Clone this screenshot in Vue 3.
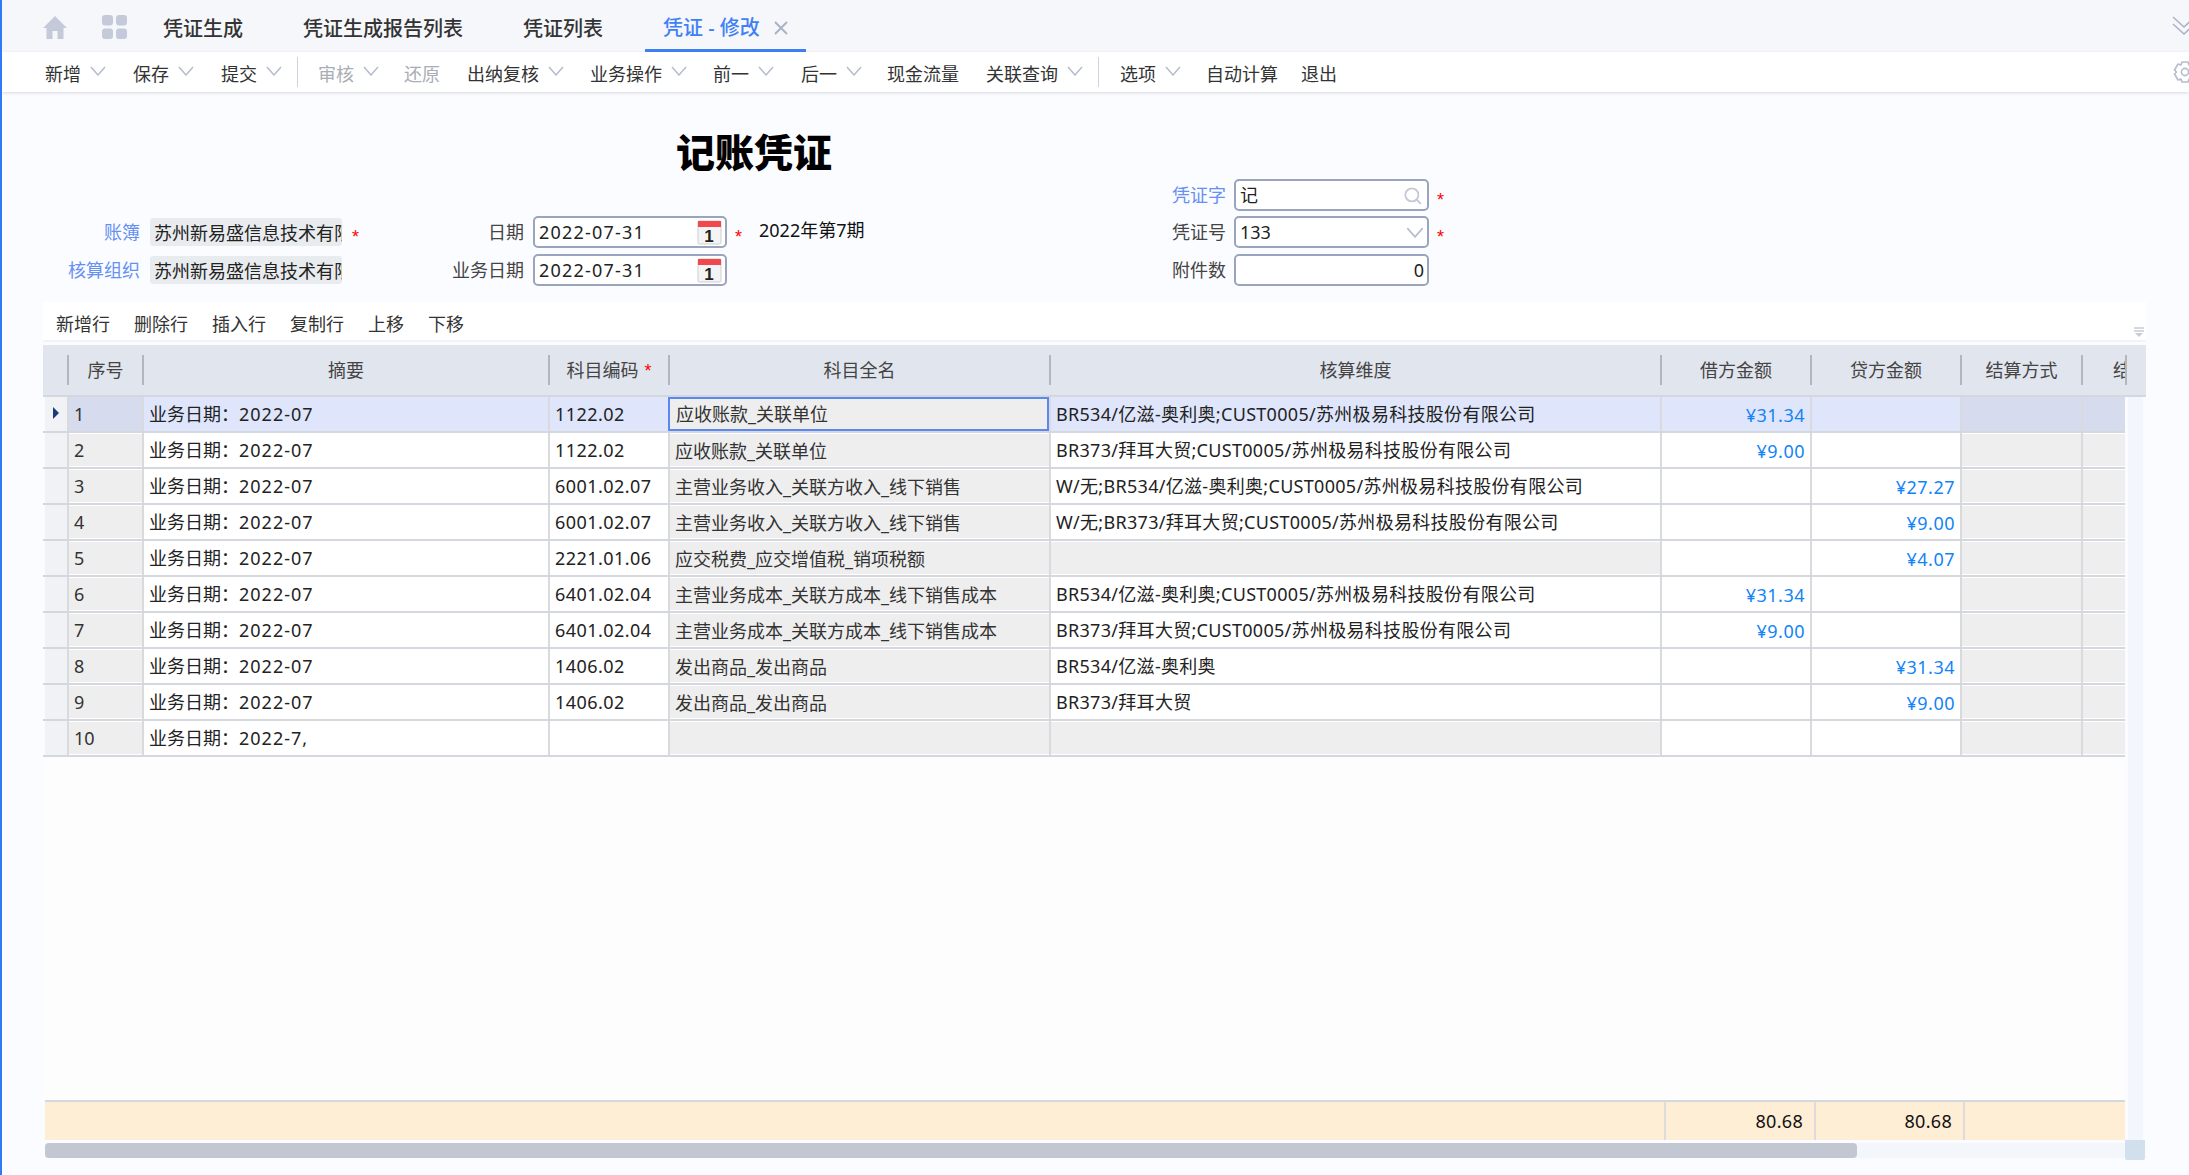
<script setup>
const actions = [
  { t: '新增', c: true }, { t: '保存', c: true }, { t: '提交', c: true }, { sep: true },
  { t: '审核', c: true, off: true, ml: -1 }, { t: '还原', off: true, ml: -2 }, { t: '出纳复核', c: true },
  { t: '业务操作', c: true, ml: -1 }, { t: '前一', c: true, ml: -1 }, { t: '后一', c: true }, { t: '现金流量', ml: -2 },
  { t: '关联查询', c: true }, { sep: true }, { t: '选项', c: true, ml: 0 }, { t: '自动计算', ml: -2 }, { t: '退出', ml: -4 }
]
const rowActions = ['新增行', '删除行', '插入行', '复制行', '上移', '下移']
const headers = [
  { t: '' }, { t: '序号' }, { t: '摘要' }, { t: '科目编码', req: true }, { t: '科目全名' }, { t: '核算维度' },
  { t: '借方金额' }, { t: '贷方金额' }, { t: '结算方式' }, { t: '结算方式', clip: true }, { t: '', end: true }
]
const sz = '2022-07'
const zs = '主营业务收入_关联方收入_线下销售'
const cb = '主营业务成本_关联方成本_线下销售成本'
const a = 'BR534/亿滋-奥利奥'
const b = 'BR373/拜耳大贸'
const c = ';CUST0005/苏州极易科技股份有限公司'
const rows = [
  { s: sz, code: '1122.02', name: '应收账款_关联单位', dim: a + c, dr: '¥31.34', cr: '' },
  { s: sz, code: '1122.02', name: '应收账款_关联单位', dim: b + c, dr: '¥9.00', cr: '' },
  { s: sz, code: '6001.02.07', name: zs, dim: 'W/无;' + a + c, dr: '', cr: '¥27.27' },
  { s: sz, code: '6001.02.07', name: zs, dim: 'W/无;' + b + c, dr: '', cr: '¥9.00' },
  { s: sz, code: '2221.01.06', name: '应交税费_应交增值税_销项税额', dim: '', dr: '', cr: '¥4.07' },
  { s: sz, code: '6401.02.04', name: cb, dim: a + c, dr: '¥31.34', cr: '' },
  { s: sz, code: '6401.02.04', name: cb, dim: b + c, dr: '¥9.00', cr: '' },
  { s: sz, code: '1406.02', name: '发出商品_发出商品', dim: a, dr: '', cr: '¥31.34' },
  { s: sz, code: '1406.02', name: '发出商品_发出商品', dim: b, dr: '', cr: '¥9.00' },
  { s: '2022-7,', code: '', name: '', dim: '', dr: '', cr: '' }
]
</script>

<template>
  <div class="page">
    <header class="tabbar">
      <svg class="home" viewBox="0 0 24 24" width="24" height="24"><path d="M12 1 L24 13 H20.5 V24 H14.5 V16 H9.5 V24 H3.5 V13 H0 Z" fill="#c5cadb" /></svg>
      <svg class="apps" viewBox="0 0 25 24" width="25" height="24">
        <rect x="0" y="0" width="11" height="10.5" rx="3" fill="#c5cadb" />
        <rect x="14" y="0" width="11" height="10.5" rx="3" fill="#c5cadb" />
        <rect x="0" y="13.5" width="11" height="10.5" rx="3" fill="#c5cadb" />
        <rect x="14" y="13.5" width="11" height="10.5" rx="3" fill="#c5cadb" />
      </svg>
      <div class="tab first">凭证生成</div>
      <div class="tab">凭证生成报告列表</div>
      <div class="tab">凭证列表</div>
      <div class="tab active">凭证 - 修改
        <svg class="close" viewBox="0 0 14 14" width="14" height="14"><path d="M1 1 L13 13 M13 1 L1 13" stroke="#a9b2c6" stroke-width="2" /></svg>
      </div>
      <svg class="more" viewBox="0 0 24 20" width="24" height="20">
        <path d="M1 1 L12 11 L23 1 M1 8 L12 18 L23 8" fill="none" stroke="#aab3c7" stroke-width="1.6" />
      </svg>
    </header>

    <nav class="toolbar">
      <template v-for="(x, i) in actions" :key="i">
        <span v-if="x.sep" class="vsep"></span>
        <span v-else class="act" :class="{ off: x.off }" :style="x.ml ? { marginLeft: x.ml + 'px' } : null">
          {{ x.t }}
          <svg v-if="x.c" viewBox="0 0 16 10" width="16" height="10"><path d="M1 1 L8 9 L15 1" fill="none" stroke="#b5bccc" stroke-width="1.5" /></svg>
        </span>
      </template>
      <svg class="gear" viewBox="0 0 24 24" width="24" height="24">
        <path d="M9 2 H15 L16 5 L19 4 L22.500 10 L20.500 12 L22.500 14 L19 20 L16 19 L15 22 H9 L8 19 L5 20 L1.500 14 L3.500 12 L1.500 10 L5 4 L8 5 Z" fill="none" stroke="#b5bccc" stroke-width="1.6" stroke-linejoin="round" />
        <circle cx="12" cy="12" r="3.600" fill="none" stroke="#b5bccc" stroke-width="1.6" />
      </svg>
    </nav>

    <section class="form">
      <div class="form-main">
        <h1 class="title">记账凭证</h1>
        <div class="form-rows">
          <div class="col-left">
            <div class="field">
              <label class="lbl w140 link">账簿</label>
              <div class="ro">苏州新易盛信息技术有限公司</div>
              <span class="star far">*</span>
            </div>
            <div class="field">
              <label class="lbl w140 link">核算组织</label>
              <div class="ro">苏州新易盛信息技术有限公司</div>
            </div>
          </div>
          <div class="col-mid">
            <div class="field">
              <label class="lbl w124">日期</label>
              <div class="input date">2022-07-31
                <svg class="cal" viewBox="0 0 25 25" width="25" height="25">
                  <rect x="1" y="1" width="23" height="23" rx="1.500" fill="#f4f4f4" stroke="#cfcfcf" />
                  <rect x="1" y="1" width="23" height="6" fill="#f0484c" />
                  <text x="12.500" y="22" text-anchor="middle" class="cal-num">1</text>
                </svg>
              </div>
              <span class="star">*</span>
              <span class="period">2022年第7期</span>
            </div>
            <div class="field">
              <label class="lbl w124">业务日期</label>
              <div class="input date">2022-07-31
                <svg class="cal" viewBox="0 0 25 25" width="25" height="25">
                  <rect x="1" y="1" width="23" height="23" rx="1.500" fill="#f4f4f4" stroke="#cfcfcf" />
                  <rect x="1" y="1" width="23" height="6" fill="#f0484c" />
                  <text x="12.500" y="22" text-anchor="middle" class="cal-num">1</text>
                </svg>
              </div>
            </div>
          </div>
        </div>
      </div>
      <div class="form-side">
        <div class="field tight">
          <label class="lbl w54 link">凭证字</label>
          <div class="input wide">记
            <svg class="suffix" viewBox="0 0 16 16" width="18" height="18">
              <circle cx="7" cy="7" r="5.800" fill="none" stroke="#c3c9d6" stroke-width="1.600" />
              <path d="M11 11 L15 15" stroke="#c3c9d6" stroke-width="1.800" />
            </svg>
          </div>
          <span class="star">*</span>
        </div>
        <div class="field">
          <label class="lbl w54">凭证号</label>
          <div class="input wide">133
            <svg class="suffix chev" viewBox="0 0 16 10" width="18" height="11"><path d="M1 1 L8 9 L15 1" fill="none" stroke="#b5bccc" stroke-width="1.500" /></svg>
          </div>
          <span class="star">*</span>
        </div>
        <div class="field">
          <label class="lbl w54">附件数</label>
          <div class="input wide num">0</div>
        </div>
      </div>
    </section>

    <section class="grid-area">
      <div class="row-actions">
        <span v-for="t in rowActions" :key="t">{{ t }}</span>
        <svg class="collapse" viewBox="0 0 10 10" width="10" height="10">
          <path d="M0 1 H10 M0 4 H10" stroke="#c8ccd4" stroke-width="1.300" />
          <path d="M1 6 H9 L5 10 Z" fill="#c8ccd4" />
        </svg>
      </div>

      <div class="thead">
        <div v-for="(h, i) in headers" :key="i" class="th" :class="{ clip: h.clip, lead: i === 0 }">
          <span v-if="h.clip" class="clip-text">{{ h.t }}</span>
          <template v-else>{{ h.t }}<i v-if="h.req" class="req">*</i></template>
        </div>
      </div>

      <div class="body-wrap">
        <div class="body-main">
          <div v-for="(r, i) in rows" :key="i" class="tr" :class="{ current: i === 0 }">
            <div class="td marker">
              <svg v-if="i === 0" viewBox="0 0 6 12" width="6" height="12"><path d="M0 0 L6 6 L0 12 Z" fill="#1b3a78" /></svg>
            </div>
            <div class="td seq gray">{{ i + 1 }}</div>
            <div class="td">业务日期：<span class="dg">{{ r.s }}</span></div>
            <div class="td code">{{ r.code }}</div>
            <div class="td gray low" :class="{ focus: i === 0 }">{{ r.name }}</div>
            <div class="td dim" :class="{ gray: !r.dim }">{{ r.dim }}</div>
            <div class="td amount">{{ r.dr }}</div>
            <div class="td amount">{{ r.cr }}</div>
            <div class="td gray"></div>
            <div class="td gray"></div>
          </div>
          <div class="spacer"></div>
          <div class="summary">
            <div></div>
            <div class="sum">80.68</div>
            <div class="sum">80.68</div>
            <div class="sum"></div>
          </div>
        </div>
        <div class="vtrack"></div>
      </div>

      <div class="hbar">
        <div class="htrack"><div class="hthumb"></div></div>
        <div class="corner"></div>
      </div>
    </section>
  </div>
</template>

<style>
html, body { margin: 0; padding: 0; overflow: hidden; background: #fbfcff; }
</style>

<style scoped>
.page {
  width: 2189px;
  height: 1175px;
  box-sizing: border-box;
  overflow: hidden;
  border-left: 2px solid #2f7bf5;
  background: #fbfcff;
  color: #222;
  font-family: "Noto Sans", "Noto Sans CJK SC", sans-serif;
  font-size: 18px;
  line-height: 24px;
}
.tabbar {
  height: 52px;
  box-sizing: border-box;
  display: flex;
  align-items: stretch;
  padding-left: 41px;
  background: #f5f7fb;
}
.home { align-self: center; margin-top: 2px; }
.apps { align-self: center; margin: 2px 0 0 35px; }
.tab {
  display: flex;
  align-items: center;
  padding: 6px 30px 0;
  font-size: 20px;
  font-weight: 500;
  color: #333;
}
.tab.first { margin-left: 6px; }
.tab.active {
  width: 161px;
  box-sizing: border-box;
  margin-left: 12px;
  padding: 6px 0 0 18px;
  color: #3f81f5;
  border-bottom: 3px solid #3f81f5;
  white-space: nowrap;
}
.close { margin-left: 14px; flex: none; }
.more { align-self: center; margin: 0 -7px 0 auto; }

.toolbar {
  height: 40px;
  box-sizing: border-box;
  display: flex;
  align-items: center;
  gap: 27px;
  padding: 4px 0 0 43px;
  background: #fff;
  box-shadow: 0 1px 3px rgba(0, 0, 0, 0.14);
  position: relative;
  color: #333;
}
.act { display: flex; align-items: center; gap: 9px; white-space: nowrap; }
.act.off { color: #a9adb5; }
.act svg { margin-top: -6px; }
.vsep { width: 1px; height: 30px; background: #ccd3df; margin: -4px -6px 0 -12px; }
.gear { margin: -4px -8px 0 auto; }

.form {
  display: flex;
  align-items: flex-end;
  height: 194px;
}
.form-main { width: 1170px; flex: none; }
.title {
  margin: 0 0 33px 674px;
  font-size: 39px;
  line-height: 50px;
  font-weight: 900;
  color: #000;
  white-space: nowrap;
}
.form-rows { display: flex; }
.col-left { width: 398px; flex: none; }
.col-mid { flex: 1; }
.field {
  height: 32px;
  display: flex;
  align-items: center;
  margin-top: 6px;
}
.field.tight { margin-bottom: -1px; }
.lbl { text-align: right; flex: none; color: #444; margin-right: 9px; white-space: nowrap; margin-top: -1px; }
.lbl.link { color: #6690f2; }
.w140 { width: 138px; }
.w124 { width: 124px; }
.w54 { width: 54px; margin-right: 8px; }
.ro {
  width: 192px;
  height: 28px;
  line-height: 30px;
  padding-left: 4px;
  margin-left: 1px;
  box-sizing: border-box;
  overflow: hidden;
  white-space: nowrap;
  background: #e9ecef;
  border-radius: 3px;
}
.star {
  color: #f00;
  font-family: "Liberation Sans", sans-serif;
  font-size: 18px;
  margin-left: 8px;
  line-height: 16px;
  transform: translateY(5px);
}
.star.far { margin-left: 10px; }
.period { margin-left: 17px; font-size: 18px; color: #111; margin-top: -4px; white-space: nowrap; }
.input {
  height: 32px;
  box-sizing: border-box;
  border: 2px solid #9aa5bd;
  border-radius: 5px;
  background: #fff;
  padding: 1px 4px 0;
  line-height: 29px;
  display: flex;
  justify-content: space-between;
  align-items: center;
  flex: none;
}
.date { width: 194px; padding-right: 3px; letter-spacing: 1.2px; }
.wide { width: 195px; }
.num { justify-content: flex-end; padding-right: 3px; }
.cal { margin-top: 0; flex: none; }
.cal-num { font-family: "Liberation Sans", sans-serif; font-weight: 700; font-size: 17px; fill: #222; }
.suffix { margin-right: 1px; }
.suffix.chev { margin-right: -1px; }

.grid-area { margin-top: 16px; padding-left: 41px; }
.row-actions {
  width: 2103px;
  height: 40px;
  box-sizing: border-box;
  border-bottom: 2px solid #f2f3f5;
  margin-bottom: 3px;
  display: flex;
  align-items: center;
  gap: 24px;
  padding: 5px 2px 0 13px;
  background: #fff;
  color: #333;
}
.collapse { margin: 16px 0 0 auto; }
.thead {
  width: 2103px;
  height: 52px;
  box-sizing: border-box;
  border-bottom: 2px solid #d4d7dd;
  display: grid;
  grid-template-columns: 24px 75px 406px 120px 381px 611px 150px 150px 121px 44px 21px;
  align-items: center;
  background: #e1e5ee;
  color: #444;
}
.th {
  height: 30px;
  line-height: 30px;
  text-align: center;
  box-sizing: border-box;
  border-left: 2px solid #b2b6bd;
  white-space: nowrap;
}
.th.lead { border-left: none; }
.th.clip { overflow: hidden; text-align: left; }
.clip-text { display: block; padding-left: 30px; }
.req { color: #f00; font-style: normal; font-size: 18px; line-height: 0; margin-left: 6px; font-family: "Liberation Sans", sans-serif; }

.body-wrap { display: flex; height: 743px; }
.body-main { width: 2082px; display: flex; flex-direction: column; flex: none; }
.tr {
  height: 36px;
  flex: none;
  box-sizing: border-box;
  border-bottom: 2px solid #d4d7dd;
  display: grid;
  grid-template-columns: 24px 75px 406px 120px 381px 611px 150px 150px 121px 44px;
  background: #fff;
}
.td {
  box-sizing: border-box;
  border-left: 2px solid #d8dade;
  padding: 0 4px 0 5px;
  line-height: 34px;
  white-space: nowrap;
  overflow: hidden;
  color: #222;
}
.dg { letter-spacing: 1px; }
.td.code { letter-spacing: 0.45px; }
.td.dim { letter-spacing: 0.3px; }
.td.marker {
  border-left: 2px solid #fbfcff;
  background: #f0f2f6;
  padding: 10px 0 0 8px;
  line-height: 0;
}
.td.gray { background: #eee; box-shadow: inset 0 1px #fff, inset 0 -1px #fff; }
.td.seq { padding-left: 5px; font-size: 18px; color: #333; }
.td.low { padding-top: 1px; color: #333; }
.td.amount { text-align: right; color: #1384f7; padding: 2px 5px 0 0; line-height: 32px; letter-spacing: 0.5px; }
.tr.current { background: #dfe6fb; }
.tr.current .td.gray { background: #d6dbee; box-shadow: none; }
.tr.current .td.marker { background: #f0f2f6; }
.tr.current .td.focus {
  background: #eee;
  border: 2px solid #5b88ee;
  padding: 0 0 0 6px;
  line-height: 31px;
}
.spacer { flex: 1; background: #fdfdfd; }
.summary {
  height: 40px;
  flex: none;
  margin-left: 2px;
  box-sizing: border-box;
  border-top: 2px solid #d4d7dd;
  display: grid;
  grid-template-columns: 1619px 150px 149px 1fr;
  background: #fdeed5;
  color: #111;
}
.sum { border-left: 2px solid #dcdcdc; text-align: right; padding-right: 11px; line-height: 38px; letter-spacing: 0.3px; }
.vtrack { width: 15px; flex: none; margin-left: 3px; background: #f3f6fc; }

.hbar { display: flex; align-items: center; height: 20px; }
.htrack { width: 2080px; height: 15px; margin-left: 2px; background: #f3f6fb; }
.hthumb { width: 1812px; height: 15px; background: #c3c7d1; border-radius: 4px; }
.corner { width: 20px; height: 20px; background: #d2dfec; border-radius: 0 0 2px 2px; }
</style>
